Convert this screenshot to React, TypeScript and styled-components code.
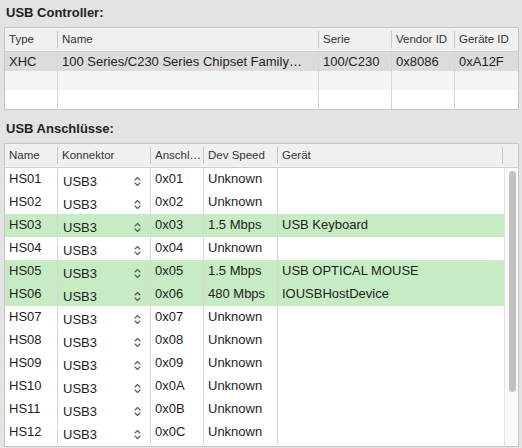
import React from "react";
import styled, { createGlobalStyle, css } from "styled-components";

const Global = createGlobalStyle`
  html, body { margin: 0; padding: 0; background: #e3e3e3; }
  body { font-family: "Liberation Sans", Arial, sans-serif; color: #1d1d1d; -webkit-font-smoothing: antialiased; }
`;

const Page = styled.div`
  width: 522px;
  height: 448px;
  box-sizing: border-box;
  padding: 5px 3px 0 4px;
  display: flex;
  flex-direction: column;
  overflow: hidden;
`;

const Title = styled.div<{ $gap: number }>`
  margin-top: ${(p) => p.$gap}px;
  height: 16px;
  line-height: 16px;
  padding-left: 2px;
  font-size: 13px;
  font-weight: 700;
  color: #222;
`;

const Table = styled.div`
  margin-top: 6px;
  border: 1px solid #c6c6c6;
  background: #fff;
  display: flex;
  flex-direction: column;
`;

const HeaderRow = styled.div<{ $cols: string }>`
  display: grid;
  grid-template-columns: ${(p) => p.$cols};
  height: 23px;
  background: #f0f0f0;
  border-bottom: 1px solid #cfcfcf;
`;

const HeadCell = styled.div<{ $sep?: boolean }>`
  position: relative;
  padding-left: 4px;
  font-size: 11.5px;
  line-height: 23px;
  color: #333;
  white-space: nowrap;
  overflow: hidden;
  ${(p) =>
    p.$sep &&
    css`
      &::after {
        content: "";
        position: absolute;
        right: 0;
        top: 3px;
        bottom: 3px;
        width: 1px;
        background: #c9c9c9;
      }
    `}
`;

const Row = styled.div<{ $cols: string; $bg: string; $h: number }>`
  display: grid;
  grid-template-columns: ${(p) => p.$cols};
  height: ${(p) => p.$h}px;
  background: ${(p) => p.$bg};
`;

const Cell = styled.div<{ $div?: boolean; $h: number; $lift?: number }>`
  padding-left: 4px;
  font-size: 13px;
  line-height: ${(p) => p.$h - (p.$lift ?? 0) * 2}px;
  white-space: nowrap;
  overflow: hidden;
  border-right: ${(p) => (p.$div ? "1px solid #d6d6d6" : "none")};
`;

const Body = styled.div`
  display: flex;
  height: 278px;
  overflow: hidden;
`;

const Rows = styled.div`
  width: 499px;
  display: flex;
  flex-direction: column;
`;

const Track = styled.div`
  width: 13px;
  border-left: 1px solid #e4e4e4;
  background: #fafafa;
  padding-top: 3px;
  display: flex;
  justify-content: center;
`;

const Thumb = styled.div`
  width: 7px;
  height: 221px;
  margin-left: 1px;
  border-radius: 4px;
  background: #c2c2c2;
`;

const Popup = styled.div`
  display: flex;
  align-items: center;
  justify-content: space-between;
  height: 23px;
  padding: 4px 9px 0 5px;
  box-sizing: border-box;
  font-size: 13px;
  border-right: 1px solid #d6d6d6;
`;

const Chevrons = () => (
  <svg width="7" height="11" viewBox="0 0 7 11" fill="none" stroke="#5a5a5a" strokeWidth="1.1" strokeLinecap="round" strokeLinejoin="round">
    <path d="M1 4 L3.5 1.5 L6 4" />
    <path d="M1 7 L3.5 9.5 L6 7" />
  </svg>
);

const CTRL_COLS = "53px 261px 73px 63px 63px";
const PORT_HEAD_COLS = "53px 93px 53px 74px 225px 15px";
const PORT_COLS = "53px 93px 53px 74px 226px";

const ports = [
  { n: "HS01", a: "0x01", s: "Unknown", d: "" },
  { n: "HS02", a: "0x02", s: "Unknown", d: "" },
  { n: "HS03", a: "0x03", s: "1.5 Mbps", d: "USB Keyboard", g: true },
  { n: "HS04", a: "0x04", s: "Unknown", d: "" },
  { n: "HS05", a: "0x05", s: "1.5 Mbps", d: "USB OPTICAL MOUSE", g: true },
  { n: "HS06", a: "0x06", s: "480 Mbps", d: "IOUSBHostDevice", g: true },
  { n: "HS07", a: "0x07", s: "Unknown", d: "" },
  { n: "HS08", a: "0x08", s: "Unknown", d: "" },
  { n: "HS09", a: "0x09", s: "Unknown", d: "" },
  { n: "HS10", a: "0x0A", s: "Unknown", d: "" },
  { n: "HS11", a: "0x0B", s: "Unknown", d: "" },
  { n: "HS12", a: "0x0C", s: "Unknown", d: "" },
];

const ctrlRows = [
  { bg: "#dcdcdc", v: ["XHC", "100 Series/C230 Series Chipset Family…", "100/C230", "0x8086", "0xA12F"] },
  { bg: "#f4f5f5", v: ["", "", "", "", ""] },
  { bg: "#ffffff", v: ["", "", "", "", ""] },
];

export default function App() {
  return (
    <>
      <Global />
      <Page>
        <Title $gap={0}>USB Controller:</Title>
        <Table>
          <HeaderRow $cols={CTRL_COLS}>
            {["Type", "Name", "Serie", "Vendor ID", "Geräte ID"].map((h, i) => (
              <HeadCell key={h} $sep={i < 4}>{h}</HeadCell>
            ))}
          </HeaderRow>
          {ctrlRows.map((r, ri) => (
            <Row key={ri} $cols={CTRL_COLS} $bg={r.bg} $h={19}>
              {r.v.map((c, i) => (
                <Cell key={i} $div={i < 4} $h={19}>{c}</Cell>
              ))}
            </Row>
          ))}
        </Table>

        <Title $gap={11}>USB Anschlüsse:</Title>
        <Table>
          <HeaderRow $cols={PORT_HEAD_COLS}>
            {["Name", "Konnektor", "Anschl…", "Dev Speed", "Gerät", ""].map((h, i) => (
              <HeadCell key={i} $sep={i < 5}>{h}</HeadCell>
            ))}
          </HeaderRow>
          <Body>
            <Rows>
              {ports.map((p) => (
                <Row key={p.n} $cols={PORT_COLS} $bg={p.g ? "#c7ecc3" : "#ffffff"} $h={23}>
                  <Cell $div $h={23} $lift={1}>{p.n}</Cell>
                  <Popup>
                    <span>USB3</span>
                    <Chevrons />
                  </Popup>
                  <Cell $div $h={23} $lift={1}>{p.a}</Cell>
                  <Cell $div $h={23} $lift={1}>{p.s}</Cell>
                  <Cell $h={23} $lift={1}>{p.d}</Cell>
                </Row>
              ))}
            </Rows>
            <Track>
              <Thumb />
            </Track>
          </Body>
        </Table>
      </Page>
    </>
  );
}
